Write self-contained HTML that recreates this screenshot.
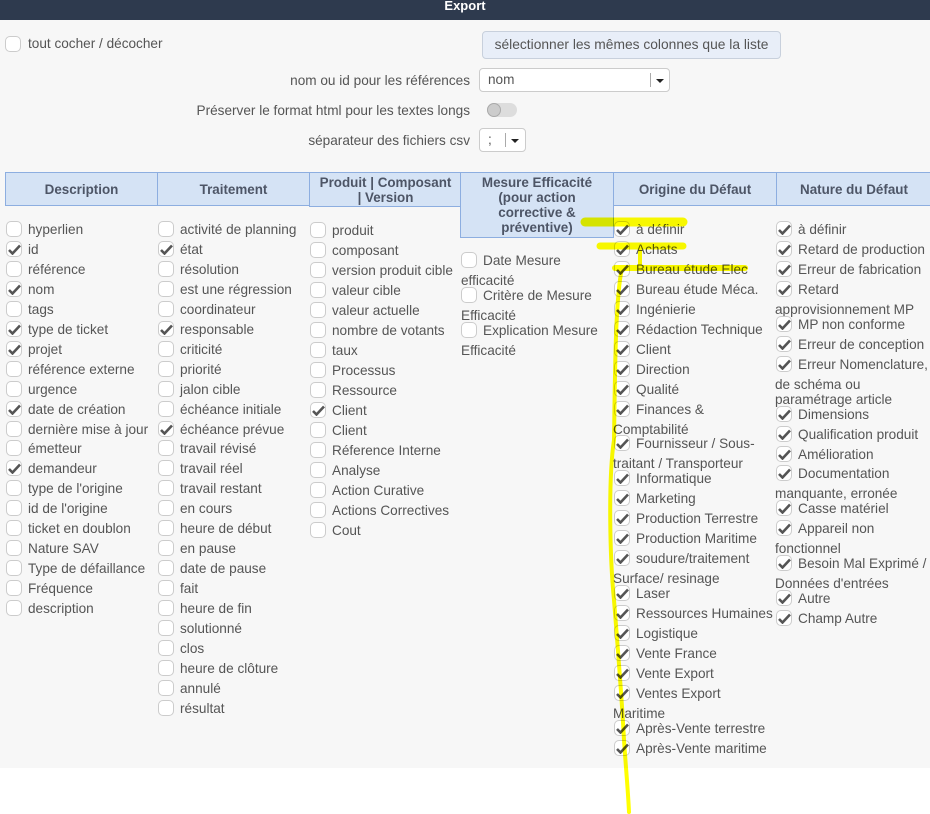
<!DOCTYPE html>
<html><head><meta charset="utf-8"><style>
body{margin:0;width:930px;height:814px;background:#fff;font-family:"Liberation Sans",sans-serif;font-size:13.6px;color:#555;position:relative;overflow:hidden}
.bg{position:absolute;left:0;top:20px;width:930px;height:748px;background:#f7f7f7}
.top{position:absolute;left:0;top:0;width:930px;height:20px;background:#2e3a4e;color:#fff;font-weight:bold;text-align:center;line-height:12px;font-size:13px}
.a{position:absolute;white-space:nowrap;line-height:16px}
.c{position:absolute;width:16px;height:16px;border:1px solid #ccc;border-radius:5px;background:#fff;box-sizing:border-box}
.c svg{position:absolute;left:1px;top:2px}
.h{position:absolute;background:#d5e3f5;border:1.5px solid #8daee0;box-sizing:border-box;font-weight:bold;color:#4d5566;text-align:center;display:flex;align-items:center;justify-content:center;line-height:15px;font-size:13.4px}
.btn{position:absolute;left:482px;top:31px;width:299px;height:28px;background:#e8eef8;border:1px solid #c8d0dc;border-radius:4px;box-sizing:border-box;text-align:center;line-height:26px;font-size:13.8px}
.sel{position:absolute;background:#fff;border:1px solid #ccc;border-radius:4px;box-sizing:border-box;height:24px;line-height:22px;padding-left:8px}
.sel i{position:absolute;top:4px;width:1px;height:14px;background:#aaa}
.sel b{position:absolute;top:10px;border-left:4px solid transparent;border-right:4px solid transparent;border-top:4px solid #222}
</style></head><body>
<div class="bg"></div>
<div class="top">Export</div>

<div class="c" style="left:5px;top:36px"></div><div class="a" style="left:28px;top:36px">tout cocher / décocher</div>
<div class="btn">sélectionner les mêmes colonnes que la liste</div>
<div class="a" style="right:460px;top:73px">nom ou id pour les références</div>
<div class="sel" style="left:479px;top:68px;width:191px">nom<i style="left:170px"></i><b style="left:176px"></b></div>
<div class="a" style="right:460px;top:103px">Préserver le format html pour les textes longs</div>
<div style="position:absolute;left:487px;top:103px;width:30px;height:14px;border-radius:7px;background:#ddd"></div>
<div style="position:absolute;left:487px;top:103px;width:14px;height:14px;border-radius:7px;background:#ccc;border:1px solid #aaa;box-sizing:border-box"></div>
<div class="a" style="right:460px;top:133px">séparateur des fichiers csv</div>
<div class="sel" style="left:479px;top:128px;width:47px">;<i style="left:25px"></i><b style="left:31px"></b></div>

<div class="h" style="left:5px;top:172px;width:153px;height:34px">Description</div>
<div class="h" style="left:157px;top:172px;width:153px;height:34px">Traitement</div>
<div class="h" style="left:309px;top:172px;width:153px;height:35px">Produit | Composant<br>| Version</div>
<div class="h" style="left:460px;top:172px;width:154px;height:66px">Mesure Efficacité<br>(pour action<br>corrective &amp;<br>préventive)</div>
<div class="h" style="left:613px;top:172px;width:164px;height:34px">Origine du Défaut</div>
<div class="h" style="left:776px;top:172px;width:156px;height:34px">Nature du Défaut</div>

<div id="items"></div>
<script>
var ck='<svg width="13" height="11" viewBox="0 0 13 11"><path d="M1 6 L4.5 9.5 L12 1.5" stroke="#555" stroke-width="2.6" fill="none"/></svg>';
var out='';
function it(x,y,t,c){out+='<div class="c" style="left:'+x+'px;top:'+(y-8)+'px">'+(c?ck:'')+'</div><div class="a" style="left:'+(x+22)+'px;top:'+(y-7)+'px">'+t+'</div>';}
function ln(x,y,t){out+='<div class="a" style="left:'+x+'px;top:'+(y-7)+'px">'+t+'</div>';}
var d=[["hyperlien"],["id",1],["référence"],["nom",1],["tags"],["type de ticket",1],["projet",1],["référence externe"],["urgence"],["date de création",1],["dernière mise à jour"],["émetteur"],["demandeur",1],["type de l'origine"],["id de l'origine"],["ticket en doublon"],["Nature SAV"],["Type de défaillance"],["Fréquence"],["description"]];
d.forEach(function(e,i){it(6,229+20*i-(i>10?1:0),e[0],e[1]);});
var t=[["activité de planning"],["état",1],["résolution"],["est une régression"],["coordinateur"],["responsable",1],["criticité"],["priorité"],["jalon cible"],["échéance initiale"],["échéance prévue",1],["travail révisé"],["travail réel"],["travail restant"],["en cours"],["heure de début"],["en pause"],["date de pause"],["fait"],["heure de fin"],["solutionné"],["clos"],["heure de clôture"],["annulé"],["résultat"]];
t.forEach(function(e,i){it(158,229+20*i-(i>10?1:0),e[0],e[1]);});
var p=[["produit"],["composant"],["version produit cible"],["valeur cible"],["valeur actuelle"],["nombre de votants"],["taux"],["Processus"],["Ressource"],["Client",1],["Client"],["Réference Interne"],["Analyse"],["Action Curative"],["Actions Correctives"],["Cout"]];
p.forEach(function(e,i){it(310,230+20*i,e[0],e[1]);});
it(461,260,"Date Mesure");ln(461,280,"efficacité");
it(461,295,"Critère de Mesure");ln(461,315,"Efficacité");
it(461,330,"Explication Mesure");ln(461,350,"Efficacité");
var o=[[229,"à définir"],[249,"Achats"],[269,"Bureau étude Elec"],[289,"Bureau étude Méca."],[309,"Ingénierie"],[329,"Rédaction Technique"],[349,"Client"],[369,"Direction"],[389,"Qualité"],[409,"Finances &amp;","Comptabilité"],[443,"Fournisseur / Sous-","traitant / Transporteur"],[478,"Informatique"],[498,"Marketing"],[518,"Production Terrestre"],[538,"Production Maritime"],[558,"soudure/traitement","Surface/ resinage"],[593,"Laser"],[613,"Ressources Humaines"],[633,"Logistique"],[653,"Vente France"],[673,"Vente Export"],[693,"Ventes Export","Maritime"],[728,"Après-Vente terrestre"],[748,"Après-Vente maritime"]];
o.forEach(function(e){it(614,e[0],e[1],1);if(e[2])ln(613,e[0]+20,e[2]);});
var n=[[229,"à définir"],[249,"Retard de production"],[269,"Erreur de fabrication"],[289,"Retard","approvisionnement MP"],[324,"MP non conforme"],[344,"Erreur de conception"],[364,"Erreur Nomenclature,","de schéma ou","paramétrage article"],[414,"Dimensions"],[434,"Qualification produit"],[454,"Amélioration"],[473,"Documentation","manquante, erronée"],[508,"Casse matériel"],[528,"Appareil non","fonctionnel"],[563,"Besoin Mal Exprimé /","Données d'entrées"],[598,"Autre"],[618,"Champ Autre"]];
n.forEach(function(e){it(776,e[0],e[1],1);if(e[2])ln(775,e[0]+20,e[2]);if(e[3])ln(775,e[0]+35,e[3]);});
document.getElementById('items').innerHTML=out;
</script>
<svg style="position:absolute;left:0;top:0;mix-blend-mode:multiply" width="930" height="814">
<g stroke="#ffff00" fill="none" stroke-linecap="round">
<path d="M585 222 L683 222" stroke-width="9"/>
<path d="M600 246 L683 246" stroke-width="7"/>
<path d="M640 250 L640 268" stroke-width="4"/>
<path d="M615 268 L745 268" stroke-width="6"/>
<path d="M622 268 C615 300 615 380 614 440 C608 480 610 560 614 600 C618 650 622 700 624 740 C626 770 628 790 629 812" stroke-width="4"/>
</g></svg>
</body></html>
